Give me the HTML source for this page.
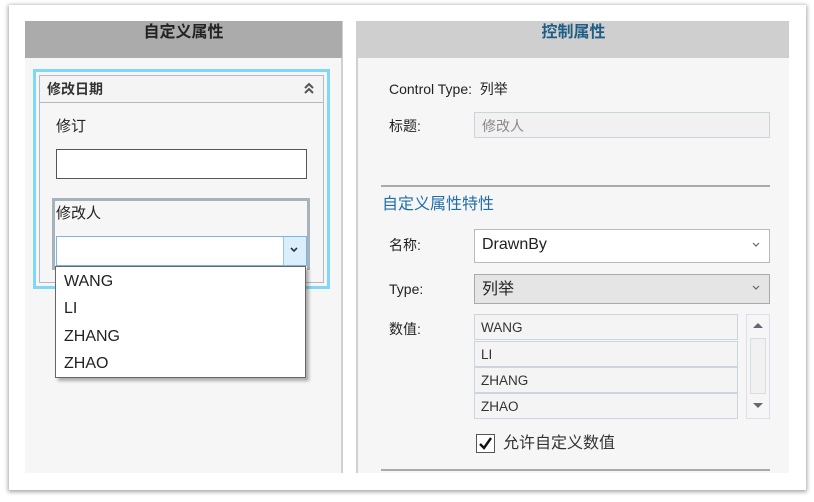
<!DOCTYPE html>
<html><head><meta charset="utf-8"><style>
*{box-sizing:border-box;margin:0;padding:0}
body{width:814px;height:502px;background:#fff;position:relative;overflow:hidden;font-family:"Liberation Sans","Noto Sans CJK SC",sans-serif;color:#222}
.a{position:absolute}
.card{left:9px;top:5px;width:797px;height:485px;background:#fff;box-shadow:0 1px 4px 1px rgba(0,0,0,.35)}
.t{font-size:14px;white-space:nowrap;line-height:1}
</style></head><body>
<div class="a card"></div>
<!-- left panel -->
<div class="a" style="left:25px;top:21px;width:318px;height:452px;background:#f6f6f6;border-right:2px solid #d0d0d0"></div>
<div class="a" style="left:25px;top:21px;width:317px;height:37px;background:#ababab"></div>
<div class="a t" style="left:25px;width:317px;top:25px;text-align:center;font-size:16px;font-weight:bold;color:#222">自定义属性</div>
<div class="a" style="left:33px;top:69px;width:297px;height:220px;border:3px solid #80d8f8"></div>
<div class="a" style="left:39px;top:75px;width:285px;height:208px;border:1px solid #b8b8c4;background:#f6f6f6"></div>
<div class="a" style="left:39px;top:75px;width:285px;height:28px;border:1px solid #b8b8c4;background:#f4f4f4"></div>
<div class="a t" style="left:47px;top:82px;color:#333;font-weight:bold">修改日期</div>
<svg class="a" style="left:303px;top:82px" width="12" height="13"><path d="M2 6L6 2L10 6M2 11L6 7L10 11" stroke="#555" stroke-width="2" fill="none"/></svg>
<div class="a t" style="left:56px;top:119px;font-size:15px">修订</div>
<div class="a" style="left:56px;top:149px;width:251px;height:30px;border:1px solid #555;background:#fff"></div>
<div class="a" style="left:52px;top:198px;width:258px;height:72px;border:3px solid #a4b4ba;border-bottom:none"></div>
<div class="a t" style="left:56px;top:206px;font-size:15px">修改人</div>
<div class="a" style="left:56px;top:236px;width:251px;height:30px;border:1px solid #7cb4e8;background:#fff"></div>
<div class="a" style="left:283px;top:237px;width:23px;height:28px;background:#dbeefb;border-left:1px solid #9cc"></div>
<svg class="a" style="left:289px;top:246px" width="10" height="8"><path d="M2 2L5 5L8 2" stroke="#333" stroke-width="1.6" fill="none"/></svg>
<div class="a" style="left:55px;top:266px;width:251px;height:112px;border:1px solid #666;background:#fff;box-shadow:3px 3px 3px rgba(0,0,0,.3)"></div>
<div class="a t" style="left:64px;top:274px;font-size:16px">WANG</div>
<div class="a t" style="left:64px;top:301px;font-size:16px">LI</div>
<div class="a t" style="left:64px;top:329px;font-size:16px">ZHANG</div>
<div class="a t" style="left:64px;top:356px;font-size:16px">ZHAO</div>
<!-- right panel -->
<div class="a" style="left:356px;top:21px;width:433px;height:452px;background:#f6f6f6;border-left:2px solid #d0d0d0"></div>
<div class="a" style="left:356px;top:21px;width:433px;height:37px;background:#cfcfcf"></div>
<div class="a t" style="left:358px;width:431px;top:25px;text-align:center;font-size:16px;font-weight:bold;color:#1e5d86">控制属性</div>
<div class="a t" style="left:389px;top:82px">Control Type:&nbsp;&nbsp;列举</div>
<div class="a t" style="left:389px;top:119px">标题:</div>
<div class="a" style="left:474px;top:112px;width:296px;height:26px;border:1px solid #cdd3dc;background:#f1f1f1"></div>
<div class="a t" style="left:482px;top:119px;color:#888">修改人</div>
<div class="a" style="left:381px;top:185px;width:389px;height:2px;background:#aaa"></div>
<div class="a t" style="left:382px;top:197px;font-size:16px;color:#1e6fa8">自定义属性特性</div>
<div class="a t" style="left:389px;top:238px">名称:</div>
<div class="a" style="left:474px;top:229px;width:296px;height:34px;border:1px solid #bbb;background:#fff"></div>
<div class="a t" style="left:482px;top:237px;font-size:16px">DrawnBy</div>
<svg class="a" style="left:751px;top:241px" width="10" height="8"><path d="M2 2L5 5L8 2" stroke="#666" stroke-width="1.2" fill="none"/></svg>
<div class="a t" style="left:389px;top:282px">Type:</div>
<div class="a" style="left:474px;top:274px;width:296px;height:30px;border:1px solid #aaa;background:#e5e5e5"></div>
<div class="a t" style="left:482px;top:282px;font-size:16px">列举</div>
<svg class="a" style="left:751px;top:284px" width="10" height="8"><path d="M2 2L5 5L8 2" stroke="#666" stroke-width="1.2" fill="none"/></svg>
<div class="a t" style="left:389px;top:322px">数值:</div>
<div class="a" style="left:474px;top:314px;width:264px;height:26px;border:1px solid #ccd4de;background:#f4f4f4"></div>
<div class="a" style="left:474px;top:341px;width:264px;height:26px;border:1px solid #ccd4de;background:#f4f4f4"></div>
<div class="a" style="left:474px;top:367px;width:264px;height:26px;border:1px solid #ccd4de;background:#f4f4f4"></div>
<div class="a" style="left:474px;top:393px;width:264px;height:26px;border:1px solid #ccd4de;background:#f4f4f4"></div>
<div class="a t" style="left:481px;top:321px;font-size:13.5px;color:#333">WANG</div>
<div class="a t" style="left:481px;top:348px;font-size:13.5px;color:#333">LI</div>
<div class="a t" style="left:481px;top:374px;font-size:13.5px;color:#333">ZHANG</div>
<div class="a t" style="left:481px;top:400px;font-size:13.5px;color:#333">ZHAO</div>
<div class="a" style="left:746px;top:314px;width:24px;height:105px;border:1px solid #dde;background:#f6f6f6"></div>
<div class="a" style="left:750px;top:338px;width:16px;height:56px;border:1px solid #d8dde4;background:#f1f1f1"></div>
<svg class="a" style="left:751px;top:320px" width="14" height="10"><path d="M2 8L7 3L12 8Z" fill="#667"/></svg>
<svg class="a" style="left:751px;top:401px" width="14" height="10"><path d="M2 2L7 7L12 2Z" fill="#667"/></svg>
<div class="a" style="left:476px;top:434px;width:19px;height:19px;border:1px solid #555;background:#fff"></div>
<svg class="a" style="left:477px;top:435px" width="17" height="17"><path d="M3 9L7 13L14 3" stroke="#111" stroke-width="2.4" fill="none"/></svg>
<div class="a t" style="left:503px;top:436px;font-size:16px;color:#333">允许自定义数值</div>
<div class="a" style="left:381px;top:469px;width:389px;height:2px;background:#aaa"></div>
</body></html>
